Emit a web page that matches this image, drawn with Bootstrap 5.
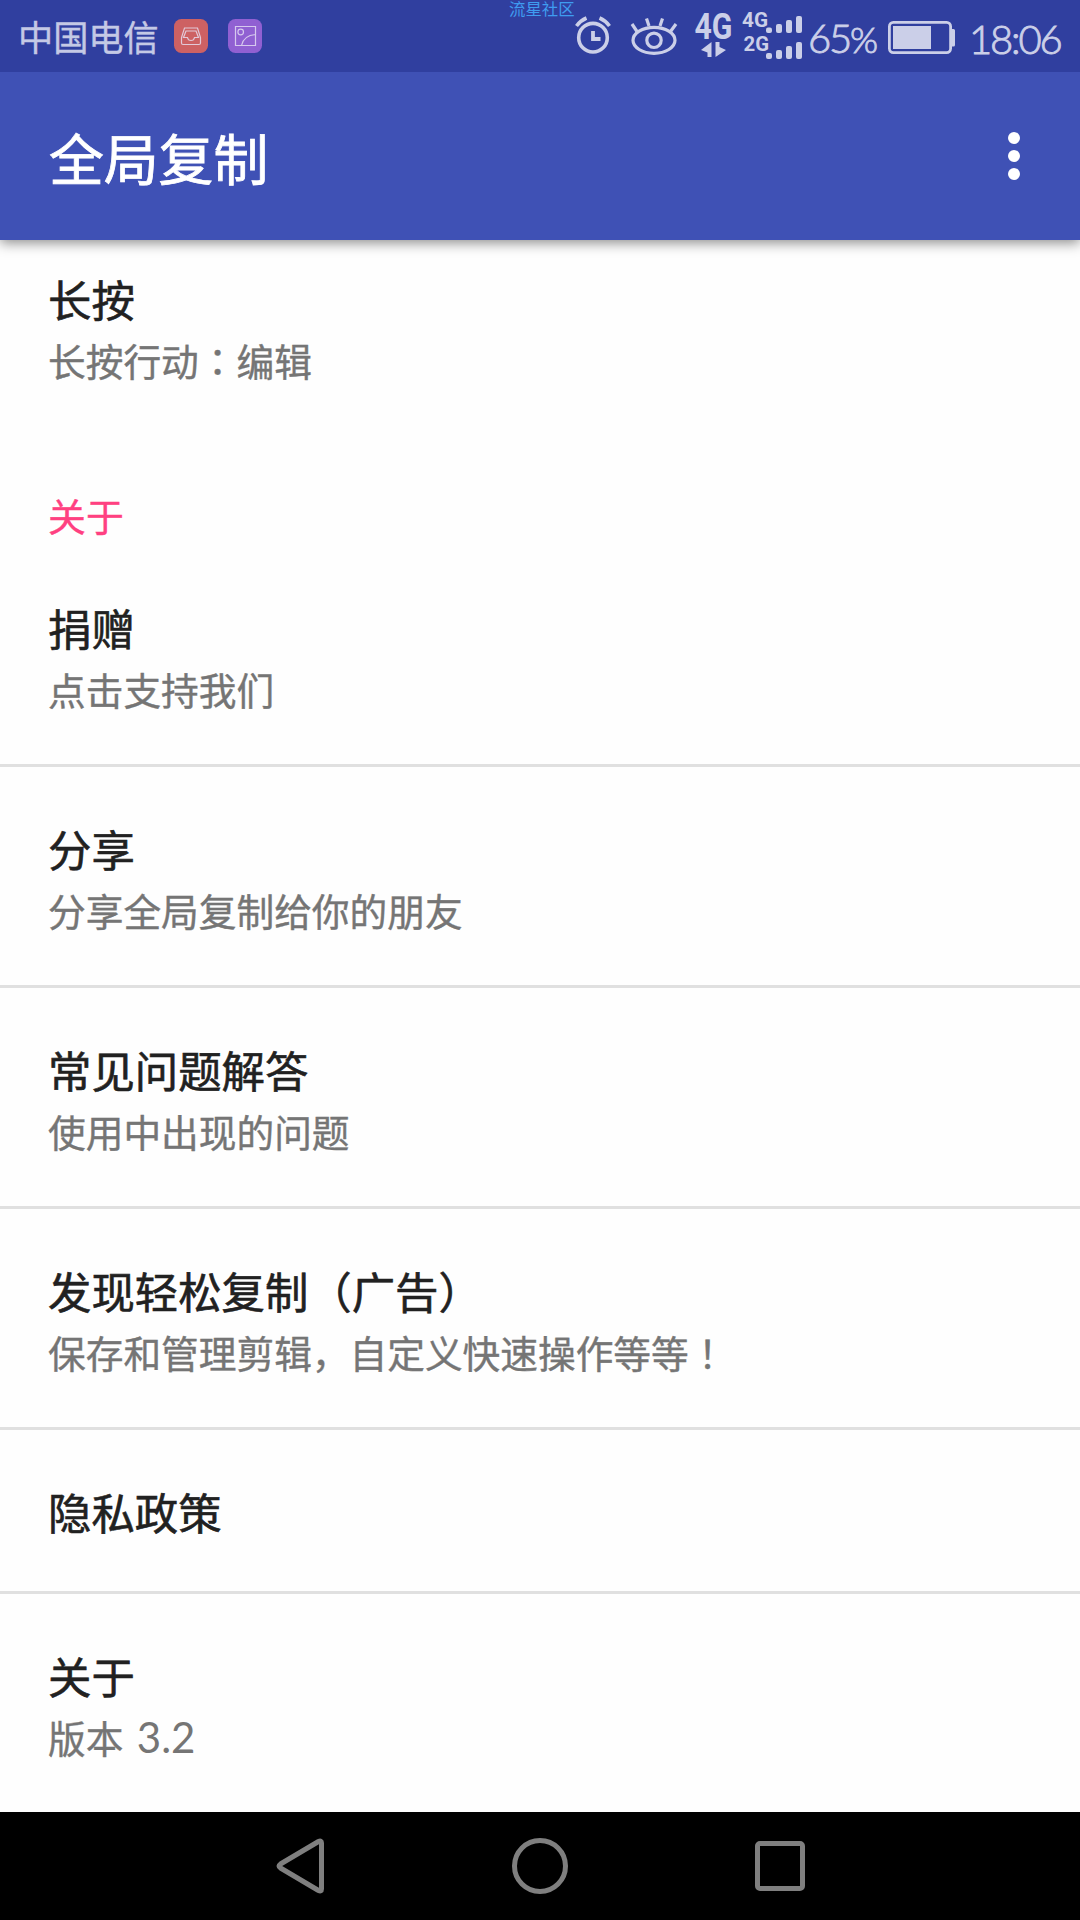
<!DOCTYPE html>
<html lang="zh-CN">
<head>
    <meta charset="UTF-8">
    <meta name="viewport" content="width=device-width, initial-scale=1.0">
    <title>全局复制</title>
    <link href="https://cdn.jsdelivr.net/npm/bootstrap@5.3.0/dist/css/bootstrap.min.css" rel="stylesheet">
    <style>
        body {
            font-family: "Noto Sans CJK SC", sans-serif;
            background-color: #fefefe;
            color: #212121;
            width: 1080px;
            height: 1920px;
            overflow: hidden;
            -webkit-text-stroke: .4px currentColor;
        }

        .status-bar {
            height: 72px;
            background-color: #303f9f;
            color: #cbcfe8;
            padding-left: 18px;
            padding-right: 18px;
            z-index: 2;
        }

        .carrier {
            font-size: 35.2px;
            line-height: 72px;
            color: #c4c9e5;
            width: 156px;
        }

        .gallery-icon {
            margin-left: 20px;
        }

        .watermark {
            left: 509px;
            top: -2px;
            font-size: 16.4px;
            line-height: 20px;
            color: #3f9cf0;
            -webkit-text-stroke: 0;
        }

        .digits {
            font-family: Lato, "Liberation Sans", sans-serif;
            font-weight: 300;
            font-size: 40px;
            line-height: 72px;
            padding-top: 5px;
            white-space: nowrap;
            -webkit-text-stroke: .9px #cbcfe8;
        }

        .battery-level {
            width: 83px;
            padding-left: 3px;
            letter-spacing: -2.2px;
        }

        .percent {
            font-size: 36px;
        }

        .battery {
            margin-top: 3px;
        }

        .clock {
            width: 93px;
            margin-left: 13px;
            letter-spacing: -2.2px;
        }

        .app-bar {
            height: 168px;
            background-color: #3f51b5;
            box-shadow: 0 3px 12px rgba(0, 0, 0, .45);
            padding-left: 49px;
            padding-right: 54px;
            z-index: 1;
        }

        .app-title {
            font-size: 54.8px;
            line-height: 60px;
            -webkit-text-stroke-width: .8px;
        }

        .pref-list {
            margin-top: -23px;
        }

        .pref {
            height: 218px;
            padding: 53px 48px 0;
        }

        .pref-line {
            border-bottom: 3px solid #e0e0e0;
            height: 221px;
        }

        .pref-short {
            height: 164px;
        }

        .pref-title {
            font-size: 43.4px;
            line-height: 56px;
            -webkit-text-stroke-width: .6px;
        }

        .pref-text {
            font-size: 37.7px;
            line-height: 50px;
            margin-top: 9px;
            color: #757575;
        }

        .pref-category {
            height: 111px;
            padding: 55px 48px 0;
            font-size: 37.9px;
            line-height: 50px;
            color: #ff4081;
        }

        /* centred full-width punctuation */
        .punct {
            font-family: "Noto Sans CJK TC", sans-serif;
        }

        .version {
            font-family: Lato, "Liberation Sans", sans-serif;
            font-size: 42px;
            line-height: 50px;
            margin-left: 5px;
            -webkit-text-stroke-width: 0;
        }

        .nav-keys {
            height: 108px;
            background-color: #000;
        }

        .nav-key {
            width: 240px;
            height: 108px;
        }
    </style>
</head>
<body class="d-flex flex-column">

<div class="status-bar d-flex align-items-center position-relative flex-shrink-0">
    <div class="carrier">中国电信</div>
    <svg width="34" height="34" viewBox="0 0 34 34" fill="none">
        <rect width="34" height="34" rx="7.500" fill="#cd6163"/>
        <path d="M10.500 9h13l3 9.500V24q0 1.500-1.500 1.500H9Q7.500 25.500 7.500 24v-5.500zM12 12h10l2.500 6.500h-4q-.5 3-3.500 3t-3.500-3h-4z" stroke="#e2c9d8" stroke-width="1.200"/>
    </svg>
    <svg class="gallery-icon" width="34" height="34" viewBox="0 0 34 34" fill="none">
        <rect width="34" height="34" rx="7.500" fill="#9060d2"/>
        <path d="M7.500 7.500h20v19h-20zM13.500 26.500q2-10 14-11" stroke="#d6c8ee" stroke-width="1.200"/>
        <circle cx="12.700" cy="13" r="2.800" stroke="#d6c8ee" stroke-width="1.200"/>
    </svg>
    <svg class="ms-auto" width="235" height="72" viewBox="570 0 235 72" fill="none" stroke="#cbcfe8">
        <!-- alarm -->
        <circle cx="593" cy="37.700" r="14.300" stroke-width="3.600"/>
        <path d="M593 31v8h7.500" stroke-width="3.800"/>
        <path d="M576.500 26q4-5.500 10-8M609.500 26q-4-5.500-10-8" stroke-width="3.600"/>
        <!-- eye -->
        <ellipse cx="654" cy="40.300" rx="21" ry="13" stroke-width="3.200"/>
        <circle cx="654" cy="40.300" r="7.200" stroke-width="3.200"/>
        <path d="M632 24l5 7.500M646.500 18.500l2.500 7.500M662.500 18.500L660 26M676 24l-5.500 7.500" stroke-width="3.200"/>
        <!-- network -->
        <g fill="#cbcfe8" stroke="none" font-family="Roboto, sans-serif" font-weight="700">
            <text x="694.500" y="38.500" font-size="36.500" textLength="38" lengthAdjust="spacingAndGlyphs">4G</text>
            <text x="742" y="27" font-size="20.500" textLength="26" lengthAdjust="spacingAndGlyphs">4G</text>
            <text x="743.500" y="51" font-size="20.500" textLength="25.500" lengthAdjust="spacingAndGlyphs">2G</text>
            <path d="M711.500 42v15h-4v-4.500L701 50zM715.500 42h4v5l6.500 3-10.500 7z"/>
            <rect x="766" y="27.500" width="6" height="5.500" rx="2"/>
            <rect x="776" y="24" width="6" height="9" rx="2"/>
            <rect x="786" y="20" width="6" height="13" rx="2"/>
            <rect x="796" y="16" width="6" height="17" rx="2"/>
            <rect x="766" y="53" width="6" height="6" rx="2"/>
            <rect x="776" y="50" width="6" height="9" rx="2"/>
            <rect x="786" y="46" width="6" height="13" rx="2"/>
            <rect x="796" y="42" width="6" height="17" rx="2"/>
        </g>
    </svg>
    <div class="digits battery-level">65<span class="percent">%</span></div>
    <svg class="battery" width="68" height="34" viewBox="0 0 68 34">
        <rect x="1.400" y="1.400" width="61.200" height="30.200" rx="4" fill="none" stroke="#cbcfe8" stroke-width="2.800"/>
        <path d="M5 5h38v23H5zM64 8h1.500q1.500 0 1.500 1.500V24q0 1.500-1.500 1.500H64z" fill="#cbcfe8"/>
    </svg>
    <div class="digits clock">18:06</div>
    <div class="watermark position-absolute">流星社区</div>
</div>

<header class="app-bar d-flex align-items-center justify-content-between position-relative flex-shrink-0 text-white">
    <div class="app-title">全局复制</div>
    <svg width="24" height="168" viewBox="0 0 24 168" fill="#fff">
        <circle cx="12" cy="66" r="6"/>
        <circle cx="12" cy="84" r="6"/>
        <circle cx="12" cy="102" r="6"/>
    </svg>
</header>

<main class="pref-list flex-grow-1">
    <div class="pref">
        <div class="pref-title">长按</div>
        <div class="pref-text">长按行动<span class="punct" lang="zh-TW">：</span>编辑</div>
    </div>
    <div class="pref-category">关于</div>
    <div class="pref pref-line">
        <div class="pref-title">捐赠</div>
        <div class="pref-text">点击支持我们</div>
    </div>
    <div class="pref pref-line">
        <div class="pref-title">分享</div>
        <div class="pref-text">分享全局复制给你的朋友</div>
    </div>
    <div class="pref pref-line">
        <div class="pref-title">常见问题解答</div>
        <div class="pref-text">使用中出现的问题</div>
    </div>
    <div class="pref pref-line">
        <div class="pref-title">发现轻松复制（广告）</div>
        <div class="pref-text">保存和管理剪辑，自定义快速操作等等<span class="punct" lang="zh-TW">！</span></div>
    </div>
    <div class="pref pref-line pref-short">
        <div class="pref-title">隐私政策</div>
    </div>
    <div class="pref">
        <div class="pref-title">关于</div>
        <div class="pref-text">版本 <span class="version">3.2</span></div>
    </div>
</main>

<footer class="nav-keys d-flex justify-content-center flex-shrink-0">
    <svg class="nav-key" viewBox="0 0 240 108" fill="none" stroke="#7f7f7f" stroke-width="5" stroke-linejoin="round">
        <path d="M138.500 29.500q3-1.500 3 1.500v46q0 3-3 1.500l-38-22.500q-3-2 0-4z"/>
    </svg>
    <svg class="nav-key" viewBox="0 0 240 108" fill="none" stroke="#7f7f7f" stroke-width="5">
        <circle cx="120" cy="54" r="25.500"/>
    </svg>
    <svg class="nav-key" viewBox="0 0 240 108" fill="none" stroke="#7f7f7f" stroke-width="5">
        <rect x="97.500" y="31.500" width="45" height="45" rx="2.500"/>
    </svg>
</footer>

<script src="https://cdn.jsdelivr.net/npm/bootstrap@5.3.0/dist/js/bootstrap.bundle.min.js"></script>
</body>
</html>
